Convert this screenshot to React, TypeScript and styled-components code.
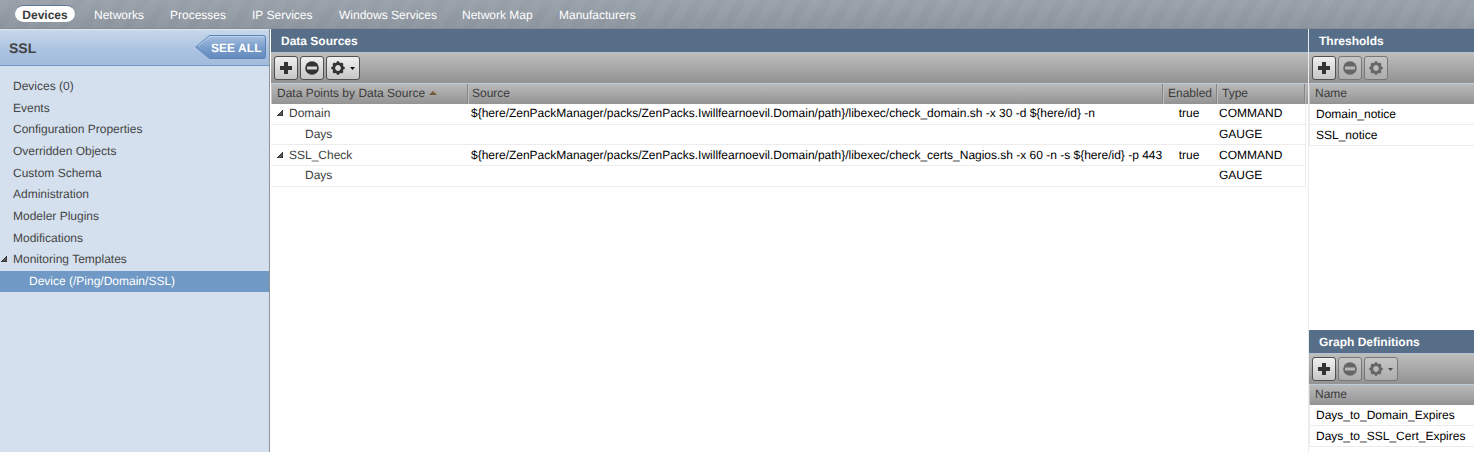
import React from "react";
import styled, { createGlobalStyle } from "styled-components";

const Global = createGlobalStyle`
  * { box-sizing: border-box; }
  body { margin: 0; background: #fff; overflow: hidden; }
  #root {
    font-family: "Liberation Sans", Arial, Helvetica, sans-serif;
    font-size: 12px; color: #3e3e3e; text-rendering: geometricPrecision;
  }
`;

const Page = styled.div`
  display: flex; flex-direction: column; width: 1474px; height: 452px;
`;
const Nav = styled.nav`
  display: flex; align-items: center; height: 29px; flex: none;
  padding: 0 0 0 15px; color: #fff;
  background:
    linear-gradient(180deg, rgba(255,255,255,.03), rgba(60,65,75,.1)),
    repeating-linear-gradient(120deg, #99a1aa 0 8px, #959da6 9.5px 17px, #99a1aa 18.5px);
  border-bottom: 1px solid #878e97;
`;
const Pill = styled.span`
  display: flex; align-items: center; justify-content: center;
  width: 60px; height: 17px; margin-right: 19px; margin-top: -1px; padding-top: 1px;
  border-radius: 9px; border-top: 1px solid #5f7898;
  background: #fff; color: #3a3a3a; font-weight: bold;
`;
const NavItem = styled.span<{ $w: number }>`
  width: ${(p) => p.$w}px; white-space: nowrap; line-height: 14px; padding-top: 1px;
`;
const Body = styled.div`display: flex; flex: 1; min-height: 0;`;
const Sidebar = styled.aside`
  width: 270px; flex: none; background: #d4e0ee; border-right: 1px solid #8e9299;
`;
const SideHead = styled.header`
  height: 37px; display: flex; align-items: center; justify-content: space-between;
  padding: 1px 3px 0 9px; border-top: 1px solid #d9e5f3; border-bottom: 1px solid #6d98c8;
  background: linear-gradient(#c8d8eb, #a9c2e0 60%, #a3bcdc);
  font-size: 14px; font-weight: bold; color: #444;
`;
const SeeAll = styled.svg`display: block; margin-top: -2px;`;
const SideList = styled.ul`list-style: none; margin: 0; padding: 10px 0 0;`;
const SideItem = styled.li<{ $child?: boolean }>`
  display: flex; align-items: center; height: 21.65px; line-height: 14px;
  padding-bottom: 1.4px;
  padding-left: ${(p) => (p.$child ? 29 : 0)}px;
  background: ${(p) => (p.$child ? "#7099c5" : "none")};
  color: ${(p) => (p.$child ? "#fff" : "#454545")};
`;
const ArrowSlot = styled.span<{ $w: number }>`
  width: ${(p) => p.$w}px; flex: none; display: flex; justify-content: center;
`;
const Main = styled.main`
  width: 1037px; flex: none; margin-left: 1px;
`;
const Aside = styled.div`
  flex: 1; min-width: 0; display: flex; flex-direction: column;
  border-left: 1px solid #ececec; overflow: hidden;
`;
const Panel = styled.section<{ $h?: number }>`
  height: ${(p) => (p.$h ? p.$h + "px" : "auto")};
`;
const Title = styled.h2`
  margin: 0; height: 23px; padding: 0 0 0 10px; font-size: 12px; line-height: 24px;
  color: #fff; background: #576e88;
`;
const Toolbar = styled.div`
  height: 31px; display: flex; gap: 2px; padding: 3px 0 0 3px;
  background: linear-gradient(#bdbdbd, #929292); border-top: 1px solid #b3c0cd;
`;
const Button = styled.button<{ $menu?: boolean; $off?: boolean }>`
  width: ${(p) => (p.$menu ? 34 : 24)}px; height: 24px; padding: 0;
  display: flex; align-items: center; justify-content: center; gap: 5px;
  border: 1px solid ${(p) => (p.$off ? "#777" : "#505050")}; border-radius: 3px;
  background: ${(p) => (p.$off ? "linear-gradient(#c6c6c6, #adadad)" : "linear-gradient(#f0f0f0, #c6c6c6)")};
  color: ${(p) => (p.$off ? "#666" : "#333")};
`;
const Header = styled.div`
  height: 21px; display: flex; color: #3c3c3c; line-height: 18px;
  background: linear-gradient(#bababa, #939393); border-top: 1px solid #bfcbd8;
  border-left: 1px solid #c8c8c8;
`;
const HeadCell = styled.div<{ $w?: number; $line?: boolean }>`
  width: ${(p) => (p.$w ? p.$w + "px" : "auto")}; flex: none; padding: 0 0 2px 5px;
  display: flex; align-items: center; gap: 4px; white-space: nowrap;
  border-right: ${(p) => (p.$line ? "1px solid #858585" : "0")};
  & + & { box-shadow: inset 1px 0 #bdbdbd; }
  &:nth-child(2) { padding-left: 4px; }
`;
const Row = styled.div<{ $h: number; $drop?: boolean }>`
  display: flex; align-items: center; width: 1035px; height: ${(p) => p.$h}px;
  border-bottom: 1px solid #ececec; border-right: 1px solid #ececec;
  color: #000; white-space: nowrap; line-height: 14px;
  padding-bottom: ${(p) => (p.$drop ? 0 : 2)}px;
`;
const NameCell = styled.div<{ $child?: boolean }>`
  width: 200px; flex: none; display: flex; align-items: center; color: #3e3e3e;
  padding-left: ${(p) => (p.$child ? 34 : 0)}px;
`;
const SourceCell = styled.div`
  width: 692px; flex: none; letter-spacing: -0.01px;
`;
const EnabledCell = styled.div`width: 52px; flex: none; text-align: center;`;
const TypeCell = styled.div`padding-left: 4px;`;
const ListRow = styled.div`
  height: 21px; padding-left: 6px; line-height: 21px; color: #000;
  border-bottom: 1px solid #ececec; border-left: 1px solid #ececec; white-space: nowrap;
`;

const Expander = () => (
  <svg width="6" height="6" viewBox="0 0 6 6">
    <path d="M6 0V6H0Z" fill="#555" stroke="#1c1c1c" strokeWidth=".8" />
  </svg>
);
const Plus = () => (
  <svg width="12" height="12" viewBox="0 0 12 12">
    <path d="M4 0h4v4h4v4H8v4H4V8H0V4h4z" fill="currentColor" />
  </svg>
);
const Minus = ({ bar }: { bar: string }) => (
  <svg width="14" height="14" viewBox="0 0 14 14">
    <circle cx="7" cy="7" r="6.8" fill="currentColor" />
    <rect x="2" y="5.5" width="10" height="3" rx=".5" fill={bar} />
  </svg>
);
const Gear = () => (
  <svg width="14" height="14" viewBox="-7 -7 14 14">
    {[0, 45, 90, 135, 180, 225, 270, 315].map((a) => (
      <path key={a} d="M-2.1-4.2L-1-6.7H1L2.1-4.2Z" fill="currentColor" transform={`rotate(${a})`} />
    ))}
    <circle r="4.2" fill="none" stroke="currentColor" strokeWidth="2.6" />
  </svg>
);
const Caret = ({ fill }: { fill: string }) => (
  <svg width="5" height="3" viewBox="0 0 5 3">
    <path d="M0 0H5L2.5 3Z" fill={fill} />
  </svg>
);
const SortArrow = () => (
  <svg width="8" height="4" viewBox="0 0 8 4">
    <path d="M0 4L4 0L8 4Z" fill="#775835" />
  </svg>
);

const Tools = ({ off, menu }: { off?: boolean; menu?: boolean }) => (
  <Toolbar>
    <Button><Plus /></Button>
    <Button $off={off}><Minus bar={off ? "#b8b8b8" : "#d8d8d8"} /></Button>
    <Button $off={off} $menu={menu}><Gear />{menu && <Caret fill={off ? "#4c4c4c" : "#111"} />}</Button>
  </Toolbar>
);

const navItems: [string, number][] = [
  ["Networks", 76], ["Processes", 82], ["IP Services", 87],
  ["Windows Services", 123], ["Network Map", 97], ["Manufacturers", 90],
];
const sideItems = [
  "Devices (0)", "Events", "Configuration Properties", "Overridden Objects",
  "Custom Schema", "Administration", "Modeler Plugins", "Modifications",
];
const base = "${here/ZenPackManager/packs/ZenPacks.Iwillfearnoevil.Domain/path}/libexec/";
const sources = [
  { name: "Domain", src: base + "check_domain.sh -x 30 -d ${here/id} -n", h: [21, 20], drop: false },
  { name: "SSL_Check", src: base + "check_certs_Nagios.sh -x 60 -n -s ${here/id} -p 443", h: [21, 21], drop: true },
];

export default function App() {
  return (
    <Page>
      <Global />
      <Nav>
        <Pill>Devices</Pill>
        {navItems.map(([t, w]) => <NavItem key={t} $w={w}>{t}</NavItem>)}
      </Nav>
      <Body>
        <Sidebar>
          <SideHead>
            SSL
            <SeeAll width="71" height="26" viewBox="0 0 71 26">
              <defs>
                <linearGradient id="seeAll" x1="0" y1="0" x2="0" y2="1">
                  <stop offset="0" stopColor="#a9c2e2" />
                  <stop offset=".5" stopColor="#7c9fcc" />
                  <stop offset="1" stopColor="#6289bc" />
                </linearGradient>
              </defs>
              <path d="M.8 13L14.5 1.5H68.5Q70.5 1.5 70.5 3.5V22.5Q70.5 24.5 68.5 24.5H14.5Z" fill="url(#seeAll)" stroke="#5b84b8" />
              <path d="M3 12L15 2.5H69" fill="none" stroke="#c3d5eb" strokeWidth=".8" />
              <text x="16" y="17.5" fill="#fff" fontSize="12" fontWeight="bold" textLength="50.5">SEE ALL</text>
            </SeeAll>
          </SideHead>
          <SideList>
            {sideItems.map((t) => (
              <SideItem key={t}><ArrowSlot $w={13} />{t}</SideItem>
            ))}
            <SideItem><ArrowSlot $w={8}><Expander /></ArrowSlot><ArrowSlot $w={5} />Monitoring Templates</SideItem>
            <SideItem $child>Device (/Ping/Domain/SSL)</SideItem>
          </SideList>
        </Sidebar>
        <Main>
          <Title>Data Sources</Title>
          <Tools menu />
          <Header>
            <HeadCell $w={196} $line>Data Points by Data Source<SortArrow /></HeadCell>
            <HeadCell $w={695} $line>Source</HeadCell>
            <HeadCell $w={54} $line>Enabled</HeadCell>
            <HeadCell $w={88} $line>Type</HeadCell>
            <HeadCell />
          </Header>
          {sources.map((s) => (
            <React.Fragment key={s.name}>
              <Row $h={s.h[0]} $drop={s.drop}>
                <NameCell><ArrowSlot $w={18}><Expander /></ArrowSlot>{s.name}</NameCell>
                <SourceCell>{s.src}</SourceCell>
                <EnabledCell>true</EnabledCell>
                <TypeCell>COMMAND</TypeCell>
              </Row>
              <Row $h={s.h[1]}>
                <NameCell $child>Days</NameCell>
                <SourceCell />
                <EnabledCell />
                <TypeCell>GAUGE</TypeCell>
              </Row>
            </React.Fragment>
          ))}
        </Main>
        <Aside>
          <Panel $h={301}>
            <Title>Thresholds</Title>
            <Tools off />
            <Header><HeadCell>Name</HeadCell></Header>
            <ListRow>Domain_notice</ListRow>
            <ListRow>SSL_notice</ListRow>
          </Panel>
          <Panel>
            <Title>Graph Definitions</Title>
            <Tools off menu />
            <Header><HeadCell>Name</HeadCell></Header>
            <ListRow>Days_to_Domain_Expires</ListRow>
            <ListRow>Days_to_SSL_Cert_Expires</ListRow>
          </Panel>
        </Aside>
      </Body>
    </Page>
  );
}
